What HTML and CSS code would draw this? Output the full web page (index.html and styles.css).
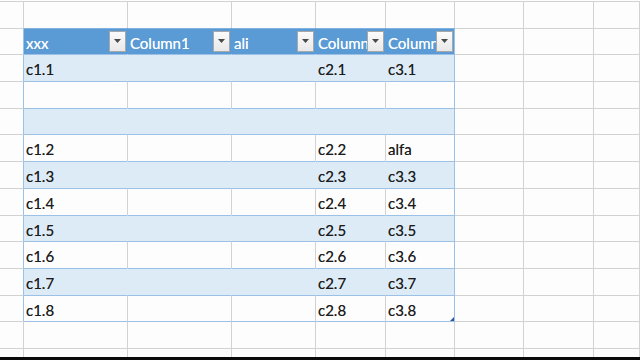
FILE: index.html
```html
<!DOCTYPE html>
<html>
<head>
<meta charset="utf-8">
<link rel="stylesheet" href="styles.css">
</head>
<body>
<div class="screen">
  <div class="sheet">
    <div class="row"><div class="c"></div><div class="c"></div><div class="c"></div><div class="c"></div><div class="c"></div><div class="c"></div><div class="c"></div><div class="c"></div><div class="c"></div></div>
    <div class="row t hd">
      <div class="c"></div>
      <div class="c"><span class="lbl">xxx</span><span class="dd"><svg width="7" height="4" viewBox="0 0 7 4"><polygon points="0,0 7,0 3.5,4" fill="#4a4a4a"/></svg></span></div>
      <div class="c"><span class="lbl">Column1</span><span class="dd"><svg width="7" height="4" viewBox="0 0 7 4"><polygon points="0,0 7,0 3.5,4" fill="#4a4a4a"/></svg></span></div>
      <div class="c"><span class="lbl">ali</span><span class="dd"><svg width="7" height="4" viewBox="0 0 7 4"><polygon points="0,0 7,0 3.5,4" fill="#4a4a4a"/></svg></span></div>
      <div class="c"><span class="lbl">Column2</span><span class="dd"><svg width="7" height="4" viewBox="0 0 7 4"><polygon points="0,0 7,0 3.5,4" fill="#4a4a4a"/></svg></span></div>
      <div class="c"><span class="lbl">Column3</span><span class="dd"><svg width="7" height="4" viewBox="0 0 7 4"><polygon points="0,0 7,0 3.5,4" fill="#4a4a4a"/></svg></span></div>
      <div class="c"></div><div class="c"></div><div class="c"></div>
    </div>
    <div class="row t band"><div class="c"></div><div class="c">c1.1</div><div class="c"></div><div class="c"></div><div class="c">c2.1</div><div class="c">c3.1</div><div class="c"></div><div class="c"></div><div class="c"></div></div>
    <div class="row t"><div class="c"></div><div class="c"></div><div class="c"></div><div class="c"></div><div class="c"></div><div class="c"></div><div class="c"></div><div class="c"></div><div class="c"></div></div>
    <div class="row t band"><div class="c"></div><div class="c"></div><div class="c"></div><div class="c"></div><div class="c"></div><div class="c"></div><div class="c"></div><div class="c"></div><div class="c"></div></div>
    <div class="row t"><div class="c"></div><div class="c">c1.2</div><div class="c"></div><div class="c"></div><div class="c">c2.2</div><div class="c">alfa</div><div class="c"></div><div class="c"></div><div class="c"></div></div>
    <div class="row t band"><div class="c"></div><div class="c">c1.3</div><div class="c"></div><div class="c"></div><div class="c">c2.3</div><div class="c">c3.3</div><div class="c"></div><div class="c"></div><div class="c"></div></div>
    <div class="row t"><div class="c"></div><div class="c">c1.4</div><div class="c"></div><div class="c"></div><div class="c">c2.4</div><div class="c">c3.4</div><div class="c"></div><div class="c"></div><div class="c"></div></div>
    <div class="row t band"><div class="c"></div><div class="c">c1.5</div><div class="c"></div><div class="c"></div><div class="c">c2.5</div><div class="c">c3.5</div><div class="c"></div><div class="c"></div><div class="c"></div></div>
    <div class="row t"><div class="c"></div><div class="c">c1.6</div><div class="c"></div><div class="c"></div><div class="c">c2.6</div><div class="c">c3.6</div><div class="c"></div><div class="c"></div><div class="c"></div></div>
    <div class="row t band"><div class="c"></div><div class="c">c1.7</div><div class="c"></div><div class="c"></div><div class="c">c2.7</div><div class="c">c3.7</div><div class="c"></div><div class="c"></div><div class="c"></div></div>
    <div class="row t"><div class="c"></div><div class="c">c1.8</div><div class="c"></div><div class="c"></div><div class="c">c2.8</div><div class="c last">c3.8<span class="handle"></span></div><div class="c"></div><div class="c"></div><div class="c"></div></div>
    <div class="row below"><div class="c"></div><div class="c"></div><div class="c"></div><div class="c"></div><div class="c"></div><div class="c"></div><div class="c"></div><div class="c"></div><div class="c"></div></div>
    <div class="row rest"><div class="c"></div><div class="c"></div><div class="c"></div><div class="c"></div><div class="c"></div><div class="c"></div><div class="c"></div><div class="c"></div><div class="c"></div></div>
  </div>
  <div class="bar"></div>
</div>
</body>
</html>
```

FILE: styles.css
```css
html, body {
  margin: 0;
  padding: 0;
  background: #fdfdfd;
}
.screen {
  width: 640px;
  height: 360px;
  display: flex;
  flex-direction: column;
  overflow: hidden;
  font-family: Lato, "Liberation Sans", sans-serif;
  font-size: 15px;
  color: #1c1c1c;
}
.sheet {
  flex: 1;
  display: flex;
  flex-direction: column;
  padding-top: 1px;
  overflow: hidden;
}
.bar {
  height: 3px;
  background: #0a0a0a;
}
.row {
  display: grid;
  grid-template-columns: 24px 104px 104px 84px 70px 69px 69px 70px 46px;
  height: 26.7px;
  flex: none;
}
.row.rest {
  flex: 1;
  height: auto;
}
.c {
  box-sizing: border-box;
  border-top: 1px solid #d2d2d2;
  border-right: 1px solid #d2d2d2;
  padding: 5px 2px 0;
  line-height: 18px;
  white-space: nowrap;
  overflow: hidden;
  min-width: 0;
  text-shadow: 0 0 0.5px rgba(0, 0, 0, 0.6);
}
/* table outline */
.row.t .c:nth-child(1) { border-right-color: #9bc2e6; }
.row.t .c:nth-child(6) { border-right-color: #9bc2e6; }
.row.t .c:nth-child(n+2):nth-child(-n+6),
.row.below .c:nth-child(n+2):nth-child(-n+6) { border-top-color: #9bc2e6; }
/* banded rows */
.row.band .c:nth-child(n+2):nth-child(-n+6) { background: #ddebf7; }
.row.band .c:nth-child(n+2):nth-child(-n+5) { border-right-color: #ddebf7; }
/* header */
.row.hd .c:nth-child(n+2):nth-child(-n+6) {
  background: #5b9bd5;
  border-top-color: #7fb0de;
  color: #ffffff;
  text-shadow: 0 0 0.5px rgba(255, 255, 255, 0.8);
  display: flex;
  align-items: flex-start;
  padding: 0 1px 0 2px;
}
.row.hd .c:nth-child(n+2):nth-child(-n+5) { border-right-color: #5b9bd5; }
.lbl {
  flex: 1;
  min-width: 0;
  overflow: hidden;
  padding-top: 5px;
}
.dd {
  flex: none;
  box-sizing: border-box;
  width: 17px;
  height: 21px;
  margin-top: 2px;
  border: 1px solid #a8a8a8;
  background: linear-gradient(#fbfbfb, #e9e9e9);
  display: flex;
  align-items: center;
  justify-content: center;
}
.dd svg { display: block; }
.last { position: relative; }
.handle {
  position: absolute;
  right: 0;
  bottom: 0;
  width: 0;
  height: 0;
  border-left: 4px solid transparent;
  border-bottom: 4px solid #2f53a0;
}
```
